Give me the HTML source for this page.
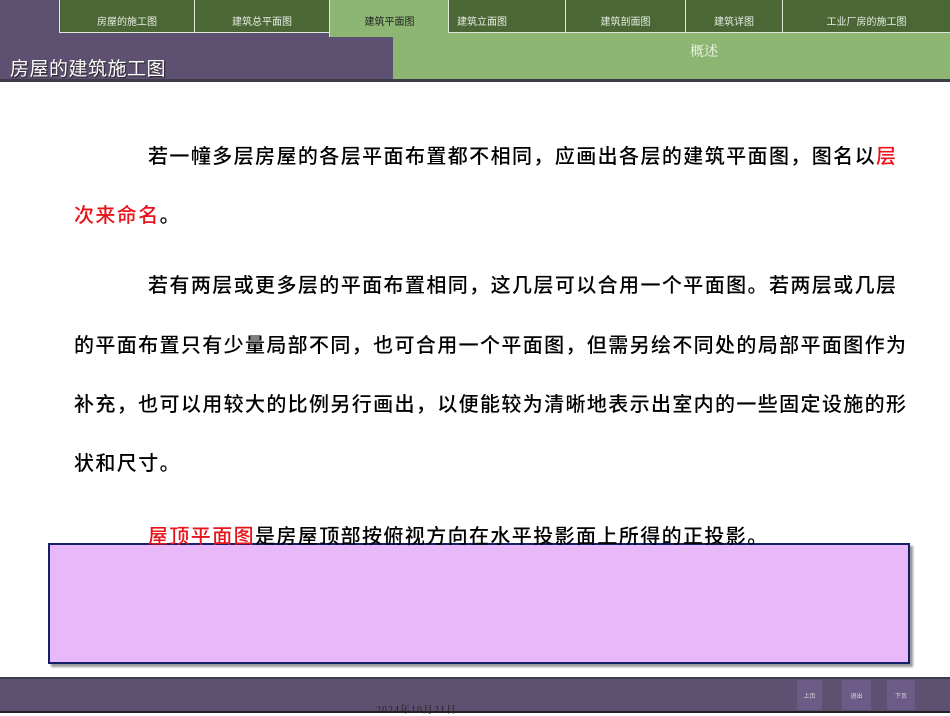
<!DOCTYPE html>
<html><head><meta charset="utf-8"><style>
*{margin:0;padding:0;box-sizing:border-box}
body{width:950px;height:713px;position:relative;overflow:hidden;background:#fff;font-family:"Liberation Sans","Noto Sans CJK SC",sans-serif}
.a{position:absolute}
.tab{position:absolute;top:0;height:33px;background:#4a6735;border:1px solid #dfe8d8;border-top:none;color:#e8eee4;font-size:10px;text-align:center;line-height:46px;overflow:hidden}
.ln{position:absolute;font-size:20px;letter-spacing:1.4px;color:#000;font-weight:500;white-space:nowrap;line-height:24px}
.j{text-align:justify;text-align-last:justify;letter-spacing:0}
.r{color:#e8141c}
.btn{position:absolute;top:680px;height:30px;background:#6b5b86;color:#ddd;font-size:6px;text-align:center;line-height:34px}
</style></head><body>
<div class="a" style="left:0;top:0;width:393px;height:80px;background:#5e5071"></div>
<div class="a" style="left:393px;top:33px;width:557px;height:46px;background:#8db673"></div>
<div class="a" style="left:0;top:79px;width:950px;height:3px;background:#3d3d48"></div>
<div class="a" style="left:10px;top:54px;color:#fff;font-size:19px;text-shadow:1px 1px 1px #222;letter-spacing:0.5px">房屋的建筑施工图</div>
<div class="a" style="left:690px;top:41px;color:#f2f6ee;font-size:14px;font-family:'Noto Serif CJK SC',serif">概述</div>
<div class="tab" style="left:59px;width:136px">房屋的施工图</div>
<div class="tab" style="left:194px;width:136px">建筑总平面图</div>
<div class="a" style="left:329px;top:0;width:120px;height:37px;background:#8db673;border-left:1px solid #dfe8d8;color:#222;font-size:10px;text-align:center;line-height:46px">建筑平面图</div>
<div class="tab" style="left:448px;width:118px;text-align:left;padding-left:8px">建筑立面图</div>
<div class="tab" style="left:565px;width:121px">建筑剖面图</div>
<div class="tab" style="left:685px;width:98px">建筑详图</div>
<div class="tab" style="left:782px;width:168px;border-right:none">工业厂房的施工图</div>

<div class="a" style="left:48px;top:543px;width:862px;height:121px;background:#e8b8f8;border:2px solid #14206a;box-shadow:3px 3px 2px #999"></div>

<div class="ln j" style="left:148px;top:145px;width:748px">若一幢多层房屋的各层平面布置都不相同，应画出各层的建筑平面图，图名以<span class="r">层</span></div>
<div class="ln" style="left:74px;top:204px"><span class="r">次来命名</span>。</div>
<div class="ln j" style="left:148px;top:274px;width:748px">若有两层或更多层的平面布置相同，这几层可以合用一个平面图。若两层或几层</div>
<div class="ln j" style="left:74px;top:334px;width:832px">的平面布置只有少量局部不同，也可合用一个平面图，但需另绘不同处的局部平面图作为</div>
<div class="ln j" style="left:74px;top:393px;width:832px">补充，也可以用较大的比例另行画出，以便能较为清晰地表示出室内的一些固定设施的形</div>
<div class="ln" style="left:74px;top:452px">状和尺寸。</div>
<div class="ln" style="left:148px;top:525px"><span class="r">屋顶平面图</span>是房屋顶部按俯视方向在水平投影面上所得的正投影。</div>

<div class="a" style="left:0;top:677px;width:950px;height:36px;background:#5e5071;border-top:2px solid #3d3d48"></div>
<div class="a" style="left:0;top:711px;width:950px;height:2px;background:#222"></div>
<div class="a" style="left:376px;top:701px;font-size:10px;color:#222;font-family:'Liberation Serif','Noto Serif CJK SC',serif;letter-spacing:1px">2024年10月21日</div>
<div class="btn" style="left:797px;width:25px">上页</div>
<div class="btn" style="left:842px;width:29px">退出</div>
<div class="btn" style="left:887px;width:28px">下页</div>
</body></html>
